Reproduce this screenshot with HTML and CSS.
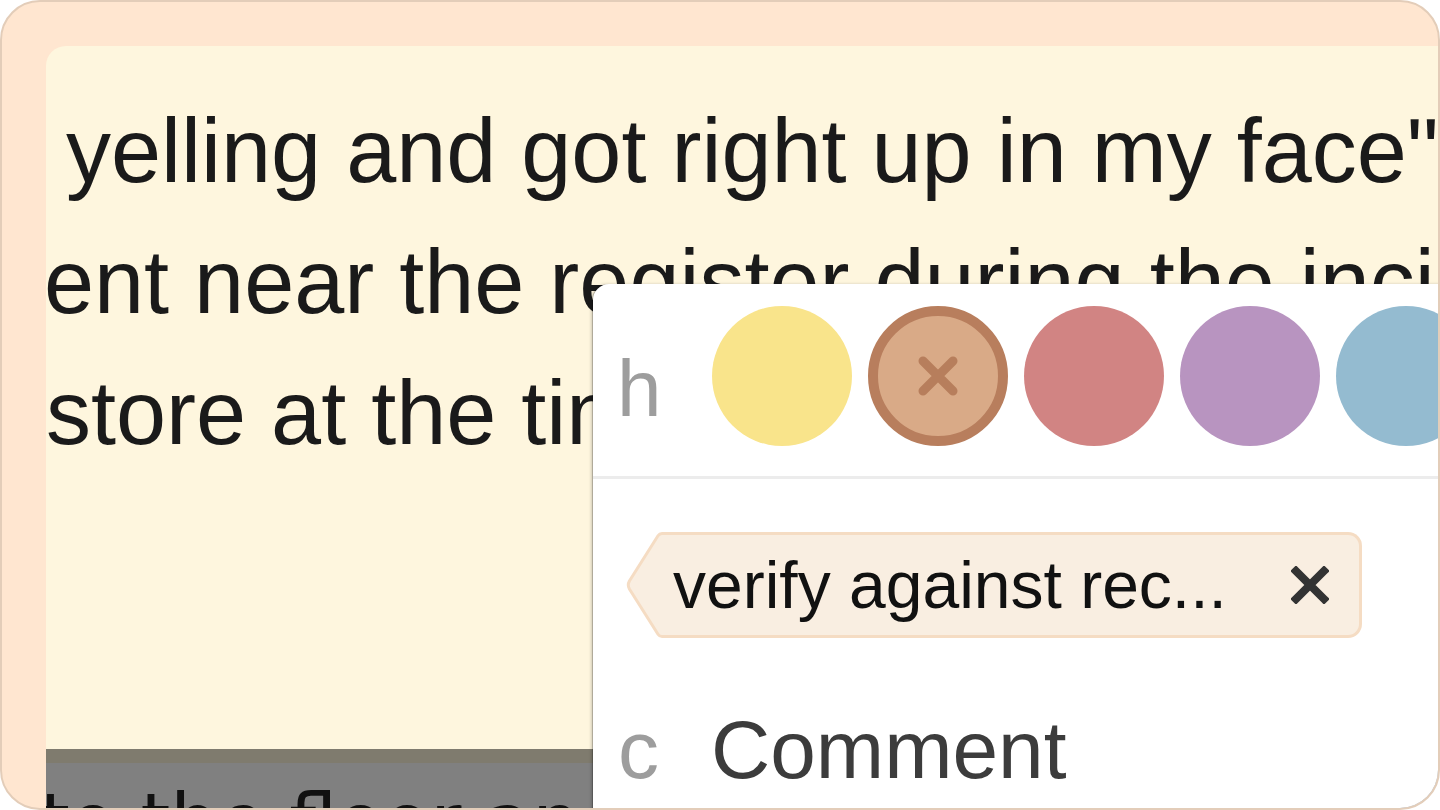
FILE: index.html
```html
<!DOCTYPE html>
<html lang="en">
<head>
<meta charset="utf-8">
<title>Highlight popup</title>
<link rel="stylesheet" href="styles.css">
</head>
<body>
<div class="frame">
  <div class="page">
    <div class="doc">
      <p class="line first">yelling and got right up in my face"</p>
      <p class="line second">ent near the register during the incident and</p>
      <p class="line third">store at the time of the incident</p>
    </div>
  </div>
  <div class="dim">
    <p class="dim-line">to the floor and</p>
  </div>

  <div class="popup">
    <div class="swatch-row">
      <span class="key key-h">h</span>
      <div class="swatches">
        <span class="swatch yellow"></span>
        <span class="swatch brown selected">
          <svg class="swatch-x" viewBox="0 0 42 42" width="42" height="42">
            <path d="M6 6 L36 36 M36 6 L6 36" stroke="#b77e5c" stroke-width="9" stroke-linecap="round" fill="none"/>
          </svg>
        </span>
        <span class="swatch red"></span>
        <span class="swatch purple"></span>
        <span class="swatch blue"></span>
      </div>
    </div>
    <div class="separator"></div>
    <div class="tag-row">
      <div class="tag">
        <svg class="tag-point" viewBox="0 0 40 106" width="40" height="106">
          <path d="M41 1.5 H36 Q33.5 1.5 32 3.8 L3.4 49 Q1.2 53 3.4 57 L32 102.2 Q33.5 104.5 36 104.5 H41" fill="#f9eee1" stroke="#f5dcc3" stroke-width="3" stroke-linejoin="round"/>
        </svg>
        <div class="tag-body">
          <span class="tag-text">verify against rec...</span>
          <svg class="tag-close" viewBox="0 0 38 38" width="38" height="38">
            <path d="M5 5 L33 33 M33 5 L5 33" stroke="#333333" stroke-width="8" stroke-linecap="square" fill="none"/>
          </svg>
        </div>
      </div>
    </div>
    <div class="comment-row">
      <span class="key key-c">c</span>
      <span class="comment-label">Comment</span>
    </div>
  </div>
</div>
</body>
</html>
```

FILE: styles.css
```css
html, body {
  margin: 0;
  padding: 0;
  background: #ffffff;
}

body {
  width: 1440px;
  height: 810px;
  overflow: hidden;
  font-family: "Liberation Sans", Arial, sans-serif;
}

.frame {
  position: relative;
  box-sizing: border-box;
  width: 1440px;
  height: 810px;
  border: 2px solid #e3cdb9;
  border-radius: 40px;
  background: #ffe6d0;
  overflow: hidden;
  display: flex;
  flex-direction: column;
  padding: 44px 0 0 44px;
}

.page {
  flex: none;
  height: 703px;
  background: #fef6de;
  border-radius: 20px 0 0 0;
  overflow: hidden;
}

.doc {
  padding-top: 40px;
  filter: blur(0.5px);
}

.line {
  margin: 0;
  font-family: "Liberation Sans", Arial, sans-serif;
  font-size: 90px;
  line-height: 131px;
  color: #1a1a1a;
  white-space: nowrap;
}

.line.first {
  padding-left: 20px;
}

.line.second {
  margin-left: -2px;
}

.line.third {
  margin-left: 0;
}

.dim {
  flex: 1;
  background: #808080;
  border-top: 14px solid #7f7b6e;
  overflow: hidden;
}

.dim-line {
  margin: 21px 0 0 -6px;
  font-family: "DejaVu Sans", sans-serif;
  font-size: 76px;
  line-height: 76px;
  color: #111111;
  white-space: nowrap;
  filter: blur(0.5px);
}

.popup {
  position: absolute;
  left: 591px;
  top: 282px;
  width: 900px;
  height: 620px;
  background: #ffffff;
  border-radius: 16px;
  box-shadow: -1px 0 0 rgba(0, 0, 0, 0.18), -2px 0 3px rgba(0, 0, 0, 0.18);
}

.swatch-row {
  display: flex;
  align-items: flex-start;
  padding: 22px 0 30px 24px;
}

.key {
  flex: none;
  font-family: "Liberation Sans", Arial, sans-serif;
  color: #9d9d9d;
  line-height: 1;
}

.key-h {
  width: 95px;
  font-size: 80px;
  margin-top: 43px;
}

.swatches {
  display: flex;
  gap: 16px;
}

.swatch {
  flex: none;
  box-sizing: border-box;
  width: 140px;
  height: 140px;
  border-radius: 50%;
  display: flex;
  align-items: center;
  justify-content: center;
}

.yellow { background: #f9e48b; }
.brown { background: #d9aa87; }
.brown.selected { border: 10px solid #b87e5d; }
.red { background: #d18483; }
.purple { background: #b894c0; }
.blue { background: #94bbd0; }

.separator {
  height: 3px;
  background: #ececec;
}

.tag-row {
  padding: 53px 0 0 33px;
}

.tag {
  display: flex;
  width: 736px;
  height: 106px;
}

.tag-point {
  flex: none;
  display: block;
}

.tag-body {
  flex: 1;
  box-sizing: border-box;
  display: flex;
  align-items: center;
  justify-content: space-between;
  background: #f9eee1;
  border: 3px solid #f5dcc3;
  border-left: none;
  border-radius: 0 14px 14px 0;
  padding: 0 30px 0 7px;
}

.tag-text {
  font-family: "Liberation Sans", Arial, sans-serif;
  font-size: 66px;
  color: #111111;
  white-space: nowrap;
}

.tag-close {
  display: block;
  flex: none;
}

.comment-row {
  display: flex;
  align-items: baseline;
  padding: 71px 0 0 25px;
}

.key-c {
  width: 93px;
  font-size: 82px;
}

.comment-label {
  font-family: "Liberation Sans", Arial, sans-serif;
  font-size: 82px;
  line-height: 1;
  color: #3c3c3c;
}
```
